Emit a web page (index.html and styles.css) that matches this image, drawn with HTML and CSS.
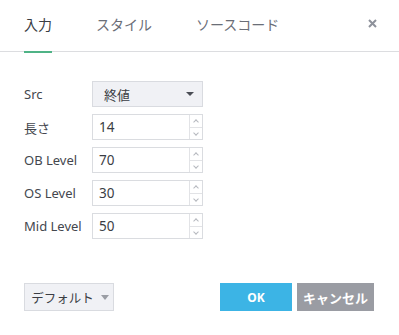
FILE: index.html
```html
<!DOCTYPE html>
<html lang="ja">
<head>
<meta charset="utf-8">
<link rel="stylesheet" href="styles.css">
</head>
<body>
<div class="dialog">
  <div class="header">
    <div class="tabs">
      <div class="tab active">入力</div>
      <div class="tab">スタイル</div>
      <div class="tab">ソースコード</div>
    </div>
    <div class="close">
      <svg width="9" height="9" viewBox="0 0 9 9"><path d="M1 1L8 8M8 1L1 8" stroke="#8e929b" stroke-width="2"/></svg>
    </div>
  </div>
  <div class="form">
    <div class="label">Src</div>
    <div class="select"><span>終値</span><span class="caret"></span></div>
    <div class="label">長さ</div>
    <div class="num"><span class="val">14</span><span class="spin"><i class="up"></i><i class="down"></i></span></div>
    <div class="label">OB Level</div>
    <div class="num"><span class="val">70</span><span class="spin"><i class="up"></i><i class="down"></i></span></div>
    <div class="label">OS Level</div>
    <div class="num"><span class="val">30</span><span class="spin"><i class="up"></i><i class="down"></i></span></div>
    <div class="label">Mid Level</div>
    <div class="num"><span class="val">50</span><span class="spin"><i class="up"></i><i class="down"></i></span></div>
  </div>
  <div class="footer">
    <div class="btn default">デフォルト<span class="caret gray"></span></div>
    <div class="right">
      <div class="btn ok">OK</div>
      <div class="btn cancel">キャンセル</div>
    </div>
  </div>
</div>
</body>
</html>
```
FILE: styles.css
```css
html, body {
  margin: 0;
  padding: 0;
  background: #fff;
}
body {
  font-family: "Noto Sans", "Noto Sans CJK JP", sans-serif;
  color: #3a3d44;
  width: 399px;
  height: 335px;
  overflow: hidden;
}
.dialog {
  display: flex;
  flex-direction: column;
  height: 335px;
}
.header {
  height: 51px;
  border-bottom: 1px solid #dcdde0;
  display: flex;
  align-items: flex-start;
  justify-content: space-between;
  padding: 0 22px 0 24px;
}
.tabs {
  display: flex;
  gap: 44px;
  height: 51px;
}
.tab {
  font-size: 14px;
  line-height: 16px;
  padding-top: 17px;
  height: 34px;
  color: #6a6e77;
  box-sizing: border-box;
  position: relative;
}
.tab.active {
  color: #3a3d44;
  height: 52px;
}
.tab.active::after {
  content: "";
  position: absolute;
  left: 0;
  right: 0;
  bottom: -1px;
  height: 2px;
  background: #4fb386;
}
.close {
  padding-top: 19px;
  line-height: 0;
}
.form {
  display: grid;
  grid-template-columns: 68px 111px;
  grid-auto-rows: 26px;
  row-gap: 7px;
  padding: 29px 0 0 24px;
  align-items: center;
}
.label {
  font-size: 13px;
  color: #44474e;
}
.select {
  height: 26px;
  box-sizing: border-box;
  background: #f0f1f5;
  border: 1px solid #d9dbe0;
  display: flex;
  align-items: center;
  justify-content: space-between;
  padding: 0 8px 0 11px;
  font-size: 13px;
  color: #3a3d44;
}
.caret {
  width: 0;
  height: 0;
  border-left: 4px solid transparent;
  border-right: 4px solid transparent;
  border-top: 4px solid #4a4d55;
}
.caret.gray {
  border-top-color: #9a9da4;
  margin-left: 7px;
  border-left-width: 4.5px;
  border-right-width: 4.5px;
  border-top-width: 5px;
}
.num {
  height: 26px;
  box-sizing: border-box;
  border: 1px solid #dadce0;
  display: flex;
  font-size: 13.5px;
}
.val {
  flex: 1;
  padding-left: 6px;
  line-height: 24px;
  color: #3a3d44;
}
.spin {
  width: 12px;
  border-left: 1px solid #e2e3e6;
  display: flex;
  flex-direction: column;
}
.spin i {
  flex: 1;
  position: relative;
}
.spin i.up {
  border-bottom: 1px solid #e2e3e6;
}
.spin i::before {
  content: "";
  position: absolute;
  left: 4px;
  width: 3px;
  height: 3px;
  border-left: 1px solid #b5b8be;
  border-top: 1px solid #b5b8be;
}
.spin i.up::before {
  top: 5px;
  transform: rotate(45deg);
}
.spin i.down::before {
  top: 3px;
  transform: rotate(225deg);
}
.footer {
  margin-top: auto;
  margin-bottom: 24px;
  display: flex;
  justify-content: space-between;
  padding: 0 25px 0 24px;
}
.right {
  display: flex;
  gap: 5px;
}
.btn {
  height: 28px;
  box-sizing: border-box;
  display: flex;
  align-items: center;
  justify-content: center;
  font-size: 12px;
}
.default {
  width: 90px;
  background: #f0f1f5;
  border: 1px solid #d9dbe0;
  color: #3a3d44;
  font-size: 12.5px;
  padding-left: 2px;
}
.ok {
  width: 72px;
  background: #3cb4e5;
  color: #fff;
  font-weight: bold;
}
.cancel {
  width: 77px;
  background: #9a9ca3;
  color: #fff;
  font-weight: bold;
  font-size: 13px;
}
```
